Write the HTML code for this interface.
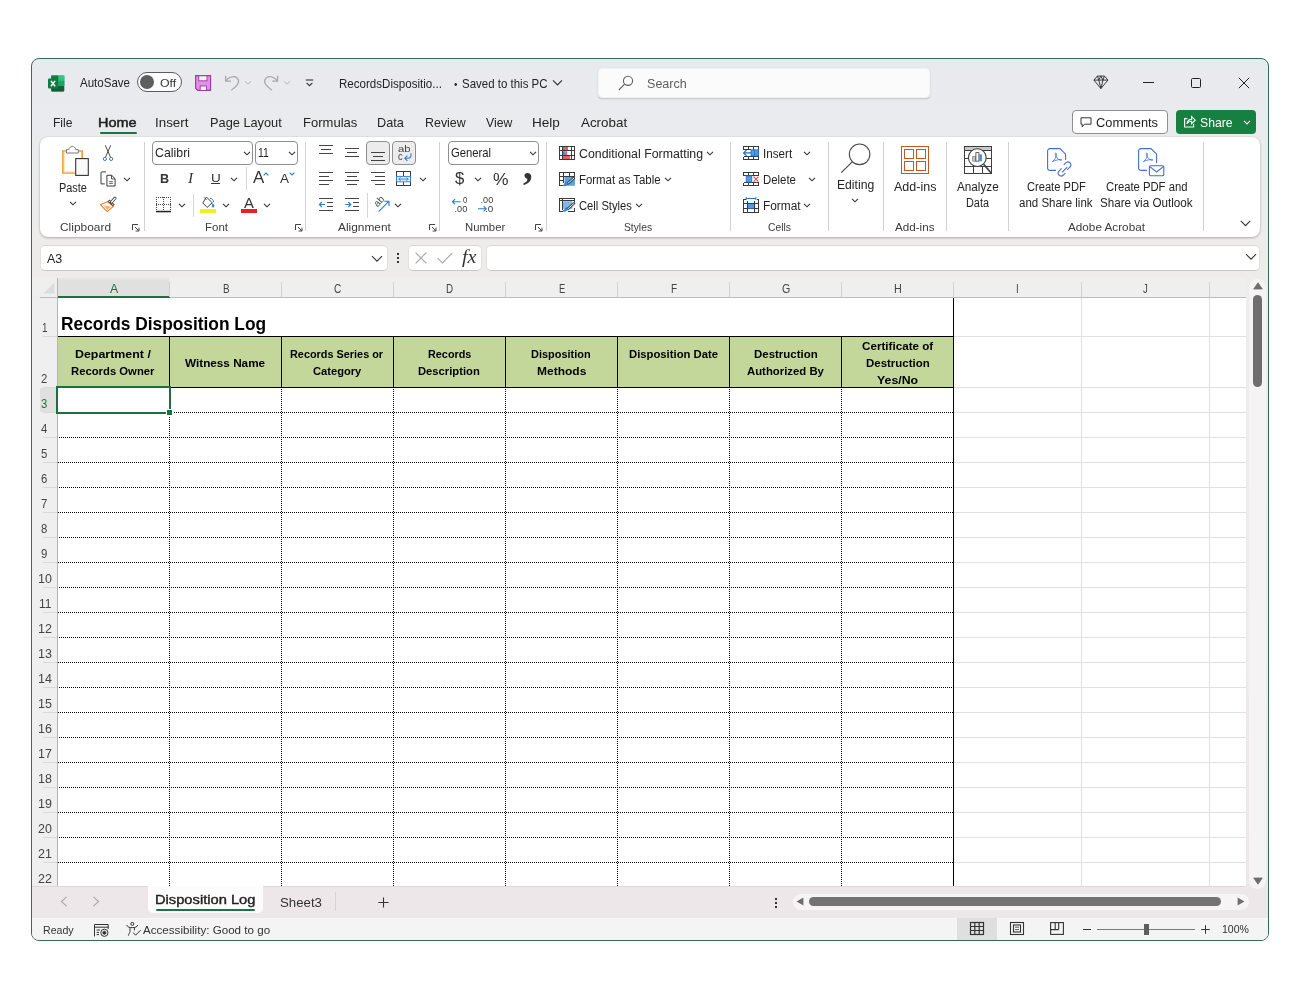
<!DOCTYPE html>
<html lang="en">
<head>
<meta charset="utf-8">
<title>RecordsDisposition - Excel</title>
<style>
html,body{margin:0;padding:0;background:#fff;}
body{width:1300px;height:1000px;overflow:hidden;position:relative;font-family:"Liberation Sans",sans-serif;color:#242424;}
#root{position:absolute;left:0;top:0;width:1300px;height:1000px;overflow:hidden;will-change:transform;}
.a{position:absolute;}
.t{position:absolute;white-space:nowrap;line-height:1;transform-origin:0 50%;display:block;}
svg{position:absolute;overflow:visible;}
#win{left:31px;top:58px;width:1236px;height:881px;border:1px solid #356b54;border-radius:8px;
 background:linear-gradient(180deg,#e8ebee 0px,#e9ebed 80px,#eeeceb 190px,#efedec 240px,#eeebec 600px,#ede7ea 830px,#ede7ea 100%);}
.sep{position:absolute;width:1px;background:#d2d2d2;top:142px;height:89px;}
.box{position:absolute;box-sizing:border-box;border:1px solid #8f8f8f;border-radius:4px;background:#fff;}
.hl{position:absolute;height:1px;}
.vl{position:absolute;width:1px;}
</style>
</head>
<body>
<div id="root">
<div id="win" class="a"></div>
<!-- ===== title bar ===== -->
<svg style="left:48px;top:74.6px" width="17" height="17" viewBox="0 0 17 17">
 <rect x="3.2" y="0.5" width="13" height="16" rx="1.2" fill="#21a366"/>
 <rect x="10.2" y="0.5" width="6.3" height="5.3" fill="#33c481"/>
 <rect x="3.2" y="0.5" width="7" height="10.6" fill="#107c41"/>
 <rect x="3.2" y="11.1" width="13" height="5.4" rx="1" fill="#185c37"/>
 <rect x="10.2" y="5.8" width="6.3" height="5.3" fill="#21a366"/>
 <rect x="0" y="3.6" width="10" height="10" rx="1" fill="#107c41"/>
 <path d="M2.9 5.9 L7.1 11.3 M7.1 5.9 L2.9 11.3" stroke="#fff" stroke-width="1.5"/>
</svg>
<span class="t" style="left:79.80px;top:77.05px;font-size:12.1px;transform:scaleX(0.9541);color:#242424">AutoSave</span>
<div class="a" style="left:137px;top:72px;width:45px;height:20px;box-sizing:border-box;border:1px solid #5c5c5c;border-radius:10px;background:#fdfdfd"></div>
<div class="a" style="left:140.2px;top:75.2px;width:13.6px;height:13.6px;border-radius:7px;background:#5e5e5e"></div>
<span class="t" style="left:159.50px;top:78.05px;font-size:10.6px;transform:scaleX(1.1650);color:#3a3a3a">Off</span>
<svg style="left:195px;top:75px" width="17" height="16" viewBox="0 0 17 16">
 <path d="M0.6 0.6 H15.6 V15.4 H2.8 L0.6 13.2 Z" fill="#dc92e2" stroke="#a832a8" stroke-width="1.1"/>
 <rect x="3.8" y="0.8" width="8.2" height="5" fill="#fdf5fd" stroke="#a832a8" stroke-width=".9"/>
 <rect x="5.2" y="11" width="6.2" height="4.4" fill="#fdf5fd" stroke="#a832a8" stroke-width=".9"/>
</svg>
<svg style="left:224px;top:74px" width="18" height="18" viewBox="0 0 18 18" fill="none" stroke="#a6a6a6" stroke-width="1.2">
 <path d="M1.6 1.8 V7.2 H7"/><path d="M1.8 7 C4.5 3.2 9.5 1.2 12.8 3.8 C16 6.6 14.6 10.4 11.2 13 L7.2 16.4"/>
</svg>
<svg style="left:244px;top:80px" width="8" height="6" viewBox="0 0 8 6" fill="none" stroke="#b5b5b5" stroke-width="1"><path d="M1 1.2 L4 4.2 L7 1.2"/></svg>
<svg style="left:263px;top:74px" width="18" height="18" viewBox="0 0 18 18" fill="none" stroke="#a6a6a6" stroke-width="1.2">
 <path d="M14.6 1.8 V7.2 H9.2"/><path d="M14.4 7 C11.7 3.2 6.7 1.2 3.4 3.8 C0.2 6.6 1.6 10.4 5 13 L9 16.4"/>
</svg>
<svg style="left:283px;top:80px" width="8" height="6" viewBox="0 0 8 6" fill="none" stroke="#b5b5b5" stroke-width="1"><path d="M1 1.2 L4 4.2 L7 1.2"/></svg>
<svg style="left:305px;top:79px" width="9" height="8" viewBox="0 0 9 8" fill="none" stroke="#333" stroke-width="1.1"><path d="M0.8 1 H8.2"/><path d="M1.6 3.8 L4.5 6.7 L7.4 3.8"/></svg>
<span class="t" style="left:339.10px;top:78.05px;font-size:12.1px;transform:scaleX(0.9563);color:#242424">RecordsDispositio...</span>
<span class="t" style="left:453.70px;top:79.71px;font-size:10px;transform:scaleX(0.9750);color:#242424">•</span>
<span class="t" style="left:461.90px;top:78.05px;font-size:12.1px;transform:scaleX(0.9497);color:#242424">Saved to this PC</span>
<svg style="left:552px;top:79px" width="11" height="8" viewBox="0 0 11 8" fill="none" stroke="#333" stroke-width="1.1"><path d="M1 1.4 L5.5 5.9 L10 1.4"/></svg>
<!-- search -->
<div class="a" style="left:597.6px;top:67.5px;width:332.2px;height:30.8px;box-sizing:border-box;border-radius:4px;background:#fbfbfb;border:1px solid #f1f2f3;box-shadow:0 1px 1.5px rgba(0,0,0,.17)"></div>
<svg style="left:618px;top:75px" width="16" height="16" viewBox="0 0 16 16" fill="none" stroke="#616161" stroke-width="1.1"><circle cx="10" cy="5.8" r="4.6"/><path d="M6.6 9.2 L0.8 15"/></svg>
<span class="t" style="left:646.90px;top:78.05px;font-size:12px;transform:scaleX(1.0469);color:#5c5c5c">Search</span>
<!-- window buttons -->
<svg style="left:1093.2px;top:75px" width="15.8" height="14.4" viewBox="0 0 18 16" fill="none" stroke="#333" stroke-width="1.1">
 <path d="M5 1 H13 L17 5.6 L9 15.2 L1 5.6 Z"/><path d="M1 5.6 H17"/><path d="M5 1 L6.6 5.6 L9 15.2 L11.4 5.6 L13 1"/><path d="M9 1 L6.6 5.6 M9 1 L11.4 5.6"/>
</svg>
<div class="a" style="left:1143px;top:82px;width:11px;height:1px;background:#222"></div>
<div class="a" style="left:1191px;top:78px;width:10px;height:10px;box-sizing:border-box;border:1px solid #222;border-radius:1.5px"></div>
<svg style="left:1238px;top:77px" width="12" height="12" viewBox="0 0 12 12" fill="none" stroke="#222" stroke-width="1"><path d="M0.8 0.8 L11.2 11.2 M11.2 0.8 L0.8 11.2"/></svg>
<!-- ===== tab row ===== -->
<span class="t" style="left:53.26px;top:117.05px;font-size:12.8px;transform:scaleX(0.9434);color:#242424">File</span>
<span class="t" style="left:98.17px;top:117.05px;font-size:12.8px;transform:scaleX(1.1297);color:#1f1f1f;-webkit-text-stroke:.5px #1f1f1f">Home</span>
<div class="a" style="left:99.5px;top:131.5px;width:37px;height:2.5px;border-radius:1.5px;background:#1a7446"></div>
<span class="t" style="left:154.66px;top:117.05px;font-size:12.8px;transform:scaleX(1.0429);color:#242424">Insert</span>
<span class="t" style="left:209.70px;top:117.05px;font-size:12.8px;transform:scaleX(0.9985);color:#242424">Page Layout</span>
<span class="t" style="left:302.78px;top:117.05px;font-size:12.8px;transform:scaleX(1.0186);color:#242424">Formulas</span>
<span class="t" style="left:376.91px;top:117.05px;font-size:12.8px;transform:scaleX(0.9921);color:#242424">Data</span>
<span class="t" style="left:424.73px;top:117.05px;font-size:12.8px;transform:scaleX(0.9708);color:#242424">Review</span>
<span class="t" style="left:486.10px;top:117.05px;font-size:12.8px;transform:scaleX(0.9553);color:#242424">View</span>
<span class="t" style="left:531.94px;top:117.05px;font-size:12.8px;transform:scaleX(1.0595);color:#242424">Help</span>
<span class="t" style="left:580.70px;top:117.05px;font-size:12.8px;transform:scaleX(1.0461);color:#242424">Acrobat</span>
<!-- comments / share -->
<div class="box" style="left:1072px;top:110px;width:96px;height:24px;border-color:#8f8f8f"></div>
<svg style="left:1080px;top:117px" width="12" height="11" viewBox="0 0 12 11" fill="none" stroke="#333" stroke-width="1"><path d="M1 0.8 H11 V7.2 H4.6 L2.2 9.8 V7.2 H1 Z"/></svg>
<span class="t" style="left:1096.40px;top:117.05px;font-size:12.8px;transform:scaleX(1.0022);color:#242424">Comments</span>
<div class="a" style="left:1176px;top:110px;width:80px;height:24px;border-radius:4px;background:#15803f"></div>
<svg style="left:1183px;top:115px" width="13" height="13" viewBox="0 0 13 13" fill="none" stroke="#fff" stroke-width="1.1"><path d="M4.4 3.6 H1.6 V12 H10.6 V8.8"/><path d="M3.8 8.8 C4.4 5.8 6.2 4.4 8.6 4.4 V1.6 L12.2 5.2 L8.6 8.6 V6.2 C6.4 6.2 5 7 3.8 8.8 Z"/></svg>
<span class="t" style="left:1199.80px;top:117.05px;font-size:12.8px;transform:scaleX(0.9550);color:#fff">Share</span>
<svg style="left:1243.4px;top:120px" width="8" height="5" viewBox="0 0 8 5" fill="none" stroke="#fff" stroke-width="1.2"><path d="M1 0.8 L4 3.8 L7 0.8"/></svg>
<!-- ===== ribbon panel ===== -->
<div class="a" style="left:40px;top:137px;width:1220px;height:99.8px;border-radius:8px;background:#fff;box-shadow:0 1px 2.5px rgba(0,0,0,.26),0 0 1.5px rgba(0,0,0,.12)"></div>
<div class="sep" style="left:143.5px"></div><div class="sep" style="left:305px"></div><div class="sep" style="left:439px"></div>
<div class="sep" style="left:546px"></div><div class="sep" style="left:730px"></div><div class="sep" style="left:828px"></div>
<div class="sep" style="left:883px"></div><div class="sep" style="left:946px"></div><div class="sep" style="left:1008px"></div><div class="sep" style="left:1203px"></div>
<!-- group labels -->
<span class="t" style="left:60.20px;top:222.05px;font-size:10.8px;transform:scaleX(1.1037);color:#3b3b3b">Clipboard</span>
<span class="t" style="left:205.40px;top:222.05px;font-size:10.8px;transform:scaleX(1.0646);color:#3b3b3b">Font</span>
<span class="t" style="left:338.00px;top:222.05px;font-size:10.8px;transform:scaleX(1.1018);color:#3b3b3b">Alignment</span>
<span class="t" style="left:465.20px;top:222.05px;font-size:10.8px;transform:scaleX(1.0463);color:#3b3b3b">Number</span>
<span class="t" style="left:624.20px;top:222.05px;font-size:10.8px;transform:scaleX(0.9532);color:#3b3b3b">Styles</span>
<span class="t" style="left:768.00px;top:222.05px;font-size:10.8px;transform:scaleX(0.9553);color:#3b3b3b">Cells</span>
<span class="t" style="left:895.00px;top:222.05px;font-size:10.8px;transform:scaleX(1.0777);color:#3b3b3b">Add-ins</span>
<span class="t" style="left:1067.50px;top:222.05px;font-size:10.8px;transform:scaleX(1.0864);color:#3b3b3b">Adobe Acrobat</span>
<!-- dialog launchers -->
<svg style="left:132px;top:224px" width="8" height="8" viewBox="0 0 8 8" fill="none" stroke="#444" stroke-width="1"><path d="M0.5 6 V0.5 H6"/><path d="M3 3 L7 7 M7 3.6 V7 H3.6"/></svg>
<svg style="left:294.5px;top:224px" width="8" height="8" viewBox="0 0 8 8" fill="none" stroke="#444" stroke-width="1"><path d="M0.5 6 V0.5 H6"/><path d="M3 3 L7 7 M7 3.6 V7 H3.6"/></svg>
<svg style="left:428.5px;top:224px" width="8" height="8" viewBox="0 0 8 8" fill="none" stroke="#444" stroke-width="1"><path d="M0.5 6 V0.5 H6"/><path d="M3 3 L7 7 M7 3.6 V7 H3.6"/></svg>
<svg style="left:535px;top:224px" width="8" height="8" viewBox="0 0 8 8" fill="none" stroke="#444" stroke-width="1"><path d="M0.5 6 V0.5 H6"/><path d="M3 3 L7 7 M7 3.6 V7 H3.6"/></svg>
<svg style="left:1240px;top:220px" width="11" height="7" viewBox="0 0 11 7" fill="none" stroke="#333" stroke-width="1.1"><path d="M0.8 0.8 L5.5 5.6 L10.2 0.8"/></svg>
<!-- == Clipboard == -->
<span class="t" style="left:59.10px;top:182.05px;font-size:12px;transform:scaleX(0.9093);color:#242424">Paste</span>
<svg style="left:68.5px;top:201px" width="8" height="5" viewBox="0 0 8 5" fill="none" stroke="#333" stroke-width="1.1"><path d="M1 0.8 L4 3.8 L7 0.8"/></svg>
<svg style="left:122.5px;top:177.3px" width="8" height="5" viewBox="0 0 8 5" fill="none" stroke="#333" stroke-width="1.1"><path d="M1 0.8 L4 3.8 L7 0.8"/></svg>
<!-- == Font == -->
<div class="box" style="left:152px;top:141px;width:101px;height:24px"></div>
<span class="t" style="left:155.00px;top:147.05px;font-size:12.6px;transform:scaleX(0.9802);color:#242424">Calibri</span>
<svg style="left:242.5px;top:151px" width="8" height="5" viewBox="0 0 8 5" fill="none" stroke="#333" stroke-width="1.1"><path d="M1 0.8 L4 3.8 L7 0.8"/></svg>
<div class="box" style="left:255px;top:141px;width:43px;height:24px"></div>
<span class="t" style="left:258.40px;top:147.05px;font-size:12.6px;transform:scaleX(0.8264);color:#242424">11</span>
<svg style="left:287.5px;top:151px" width="8" height="5" viewBox="0 0 8 5" fill="none" stroke="#333" stroke-width="1.1"><path d="M1 0.8 L4 3.8 L7 0.8"/></svg>
<span class="t" style="left:160.00px;top:172.05px;font-size:13.2px;transform:scaleX(0.9556);color:#333;font-weight:bold">B</span>
<span class="t" style="left:187.87px;top:171.05px;font-size:14.5px;transform:scaleX(1.0714);color:#333;font-style:italic;font-family:'Liberation Serif',serif">I</span>
<span class="t" style="left:211.00px;top:173.05px;font-size:11.8px;transform:scaleX(1.1500);color:#333">U</span>
<div class="a" style="left:211px;top:183.4px;width:9.4px;height:1.1px;background:#333"></div>
<svg style="left:230.2px;top:177px" width="8" height="5" viewBox="0 0 8 5" fill="none" stroke="#333" stroke-width="1.1"><path d="M1 0.8 L4 3.8 L7 0.8"/></svg>
<div class="a" style="left:245.5px;top:167px;width:1px;height:23px;background:#d6d6d6"></div>
<span class="t" style="left:252.60px;top:169.05px;font-size:16.4px;transform:scaleX(1.0273);color:#333">A</span>
<svg style="left:262.8px;top:172px" width="6" height="4" viewBox="0 0 6 4" fill="none" stroke="#2b7cd3" stroke-width="1.1"><path d="M0.6 3.4 L3 1 L5.4 3.4"/></svg>
<span class="t" style="left:280.20px;top:173.05px;font-size:12.3px;transform:scaleX(1.1000);color:#333">A</span>
<svg style="left:288.6px;top:172px" width="6" height="4" viewBox="0 0 6 4" fill="none" stroke="#2b7cd3" stroke-width="1.1"><path d="M0.6 0.6 L3 3 L5.4 0.6"/></svg>
<!-- borders icon (page coords in 26) -->
<svg style="left:178.3px;top:203px" width="8" height="5" viewBox="0 0 8 5" fill="none" stroke="#333" stroke-width="1.1"><path d="M1 0.8 L4 3.8 L7 0.8"/></svg>
<div class="a" style="left:193px;top:194px;width:1px;height:23px;background:#d6d6d6"></div>
<!-- fill colour -->
<svg style="left:200px;top:196px" width="17" height="18" viewBox="0 0 17 18" fill="none" stroke-width="1">
 <path d="M6.4 1 L12.2 6.8 L7.2 11.4 L2.8 7 Z" stroke="#444" fill="#fff"/><path d="M6.6 3.8 L4.2 1.4" stroke="#444"/>
 <path d="M12.6 7.4 C13.8 9 14.6 10 13.6 11 C12.6 11.8 11.6 10.8 12.6 7.4 Z" fill="#2b7cd3" stroke="#2b7cd3" stroke-width=".6"/>
 <path d="M9.8 2.2 C11.8 2.4 13.4 3.8 13.6 6" stroke="#2b7cd3"/>
 <rect x="0" y="13" width="16" height="4" fill="#f7ee1c" stroke="none"/>
</svg>
<svg style="left:222.2px;top:203px" width="8" height="5" viewBox="0 0 8 5" fill="none" stroke="#333" stroke-width="1.1"><path d="M1 0.8 L4 3.8 L7 0.8"/></svg>
<!-- font colour -->
<span class="t" style="left:244.10px;top:195.76px;font-size:14px;transform:scaleX(1.0600);color:#333">A</span>
<div class="a" style="left:241px;top:209px;width:16px;height:4px;background:#e8231f"></div>
<svg style="left:263.3px;top:203px" width="8" height="5" viewBox="0 0 8 5" fill="none" stroke="#333" stroke-width="1.1"><path d="M1 0.8 L4 3.8 L7 0.8"/></svg>
<!-- == Alignment == -->
<div class="box" style="left:366px;top:141px;width:24px;height:24px;background:#ececec;border-color:#8f8f8f"></div>
<div class="box" style="left:392px;top:141px;width:24px;height:24px;background:#ececec;border-color:#8f8f8f"></div>
<span class="t" style="left:398.10px;top:144.05px;font-size:9.6px;transform:scaleX(1.1707);color:#444">ab</span>
<span class="t" style="left:398.10px;top:152.05px;font-size:10.4px;transform:scaleX(0.9000);color:#444">c</span>
<svg style="left:419.3px;top:177.3px" width="8" height="5" viewBox="0 0 8 5" fill="none" stroke="#333" stroke-width="1.1"><path d="M1 0.8 L4 3.8 L7 0.8"/></svg>
<div class="a" style="left:366.5px;top:193px;width:1px;height:25px;background:#d6d6d6"></div>
<svg style="left:394.3px;top:203.3px" width="8" height="5" viewBox="0 0 8 5" fill="none" stroke="#333" stroke-width="1.1"><path d="M1 0.8 L4 3.8 L7 0.8"/></svg>
<!-- == Number == -->
<div class="box" style="left:448px;top:141px;width:91px;height:24px"></div>
<span class="t" style="left:451.40px;top:147.05px;font-size:12.6px;transform:scaleX(0.8953);color:#242424">General</span>
<svg style="left:528.5px;top:151px" width="8" height="5" viewBox="0 0 8 5" fill="none" stroke="#333" stroke-width="1.1"><path d="M1 0.8 L4 3.8 L7 0.8"/></svg>
<span class="t" style="left:455.30px;top:170.78px;font-size:16px;transform:scaleX(1.0444);color:#333">$</span>
<svg style="left:474.4px;top:176.5px" width="8" height="5" viewBox="0 0 8 5" fill="none" stroke="#333" stroke-width="1.1"><path d="M1 0.8 L4 3.8 L7 0.8"/></svg>
<span class="t" style="left:492.90px;top:170.54px;font-size:16.5px;transform:scaleX(1.0600);color:#333">%</span>
<!-- == Styles == -->
<span class="t" style="left:579.10px;top:148.05px;font-size:12px;transform:scaleX(1.0279);color:#242424">Conditional Formatting</span>
<svg style="left:705.6px;top:151.4px" width="8" height="5" viewBox="0 0 8 5" fill="none" stroke="#333" stroke-width="1.1"><path d="M1 0.8 L4 3.8 L7 0.8"/></svg>
<span class="t" style="left:579.10px;top:174.05px;font-size:12px;transform:scaleX(0.9507);color:#242424">Format as Table</span>
<svg style="left:663.6px;top:177.4px" width="8" height="5" viewBox="0 0 8 5" fill="none" stroke="#333" stroke-width="1.1"><path d="M1 0.8 L4 3.8 L7 0.8"/></svg>
<span class="t" style="left:579.10px;top:200.05px;font-size:12px;transform:scaleX(0.9333);color:#242424">Cell Styles</span>
<svg style="left:634.5px;top:203.4px" width="8" height="5" viewBox="0 0 8 5" fill="none" stroke="#333" stroke-width="1.1"><path d="M1 0.8 L4 3.8 L7 0.8"/></svg>
<!-- == Cells == -->
<span class="t" style="left:762.63px;top:148.05px;font-size:12px;transform:scaleX(0.9704);color:#242424">Insert</span>
<svg style="left:803px;top:151.4px" width="8" height="5" viewBox="0 0 8 5" fill="none" stroke="#333" stroke-width="1.1"><path d="M1 0.8 L4 3.8 L7 0.8"/></svg>
<span class="t" style="left:762.90px;top:174.05px;font-size:12px;transform:scaleX(0.9482);color:#242424">Delete</span>
<svg style="left:807.6px;top:177.4px" width="8" height="5" viewBox="0 0 8 5" fill="none" stroke="#333" stroke-width="1.1"><path d="M1 0.8 L4 3.8 L7 0.8"/></svg>
<span class="t" style="left:762.90px;top:200.05px;font-size:12px;transform:scaleX(0.9904);color:#242424">Format</span>
<svg style="left:803px;top:203.4px" width="8" height="5" viewBox="0 0 8 5" fill="none" stroke="#333" stroke-width="1.1"><path d="M1 0.8 L4 3.8 L7 0.8"/></svg>
<!-- == Editing == -->
<span class="t" style="left:837.10px;top:179.05px;font-size:12px;transform:scaleX(1.0134);color:#242424">Editing</span>
<svg style="left:851.3px;top:198.4px" width="8" height="5" viewBox="0 0 8 5" fill="none" stroke="#333" stroke-width="1.1"><path d="M1 0.8 L4 3.8 L7 0.8"/></svg>
<!-- == Add-ins == -->
<span class="t" style="left:893.90px;top:181.05px;font-size:12px;transform:scaleX(1.0421);color:#242424">Add-ins</span>
<!-- == Analyze data == -->
<span class="t" style="left:956.60px;top:181.05px;font-size:12px;transform:scaleX(0.9763);color:#242424">Analyze</span>
<span class="t" style="left:966.30px;top:197.05px;font-size:12px;transform:scaleX(0.9075);color:#242424">Data</span>
<!-- == Adobe Acrobat == -->
<svg style="left:1047px;top:147.5px" width="26" height="29" viewBox="0 0 26 29" fill="none" stroke="#3f6fce" stroke-width="1.1">
 <path d="M9 22.4 H3 C1.6 22.4 0.6 21.4 0.6 20 V3 C0.6 1.6 1.6 0.6 3 0.6 H13 L18.6 6.2 V12"/>
 <path d="M5.4 13.6 C8 12 9.6 8.6 9.4 5.8 C9.2 4.6 8 4.8 8.2 6.2 C8.8 9.4 11.4 12 14 12.4 C15.2 12.4 15 11.2 13.8 11.4 C10.8 11.6 7.4 12.6 5.4 13.6 Z" stroke-width=".8"/>
 <path d="M14.6 20.4 L12.4 22.6 C10.8 24.2 10.8 26 12 27.2 C13.2 28.4 15 28.4 16.6 26.8 L18.2 25.2"/><path d="M20.4 21.6 L22.6 19.4 C24.2 17.8 24.2 16 23 14.8 C21.8 13.6 20 13.6 18.4 15.2 L16.8 16.8"/><path d="M15 24.4 L20.2 19.2"/>
</svg>
<span class="t" style="left:1026.90px;top:181.05px;font-size:12px;transform:scaleX(0.9267);color:#242424">Create PDF</span>
<span class="t" style="left:1019.00px;top:197.05px;font-size:12px;transform:scaleX(0.9586);color:#242424">and Share link</span>
<svg style="left:1137.6px;top:147.5px" width="27" height="29" viewBox="0 0 27 29" fill="none" stroke="#3f6fce" stroke-width="1.1">
 <path d="M9 22.4 H3 C1.6 22.4 0.6 21.4 0.6 20 V3 C0.6 1.6 1.6 0.6 3 0.6 H13 L18.6 6.2 V15"/>
 <path d="M5.4 13.6 C8 12 9.6 8.6 9.4 5.8 C9.2 4.6 8 4.8 8.2 6.2 C8.8 9.4 11.4 12 14 12.4 C15.2 12.4 15 11.2 13.8 11.4 C10.8 11.6 7.4 12.6 5.4 13.6 Z" stroke-width=".8"/>
 <rect x="11.4" y="17.8" width="14.4" height="10" rx="1.2" fill="#fff"/><path d="M11.8 18.6 L18.6 24 L25.4 18.6"/>
</svg>
<span class="t" style="left:1106.10px;top:181.05px;font-size:12px;transform:scaleX(0.9392);color:#242424">Create PDF and</span>
<span class="t" style="left:1100.00px;top:197.05px;font-size:12px;transform:scaleX(0.9701);color:#242424">Share via Outlook</span>
<!-- ===== icons drawn in page coordinates ===== -->
<svg style="left:0;top:0" width="1300" height="1000" viewBox="0 0 1300 1000" fill="none">
 <!-- paste -->
 <path d="M66.4 151 H62.9 V173 H75.4" stroke="#e9a23b" stroke-width="1.7"/><path d="M66.4 152.2 H64.3 V171.8 H75.4" stroke="#fde2b5" stroke-width="1"/>
 <path d="M78.4 151 H82.2 V158.2" stroke="#e9a23b" stroke-width="1.7"/>
 <path d="M66.5 153 V149.6 H68.9 C69.3 145.4 75.3 145.4 75.7 149.6 H78.3 V153 Z" stroke="#6a6a6a" stroke-width=".9" fill="#fff"/>
 <rect x="75.7" y="158.6" width="12.6" height="16.8" stroke="#333" stroke-width="1.1" fill="#fafafa"/>
 <!-- scissors -->
 <path d="M105.3 145.3 L110.5 157.2 M110.7 145.3 L105.5 157.2" stroke="#4a4a4a" stroke-width="1"/>
 <circle cx="104.9" cy="158.9" r="1.6" stroke="#2b7cd3" stroke-width="1"/><circle cx="111.1" cy="158.9" r="1.6" stroke="#2b7cd3" stroke-width="1"/>
 <!-- copy -->
 <path d="M106 171.9 H102 Q101 171.9 101 172.9 V183.9 H104.8" stroke="#3a3a3a" stroke-width="1"/>
 <path d="M106.9 175.3 H111.7 L115.1 178.7 V186 H106.9 Z" stroke="#3a3a3a" stroke-width="1" fill="#fff"/>
 <path d="M111.5 175.5 V178.9 H114.9" stroke="#3a3a3a" stroke-width=".9"/><path d="M109.2 181.6 H112.9 M109.2 183.4 H112.9" stroke="#3a3a3a" stroke-width=".8"/>
 <!-- format painter -->
 <path d="M107.6 201.8 L100.5 204.6 L107.1 211.7 L113.4 206.3 Z" stroke="#e5822f" stroke-width="1.1" fill="#fff" stroke-linejoin="round"/>
 <path d="M103.6 205.6 L107.3 209.9 L111 206.6 Z" fill="#f3b27c"/>
 <path d="M108.4 200.4 L113.9 205.5" stroke="#4a4a4a" stroke-width="2.6"/><path d="M108.8 200.8 L113.5 205.1" stroke="#fff" stroke-width=".9"/>
 <path d="M111.3 202.3 L115 198.1" stroke="#4a4a4a" stroke-width="3.1" stroke-linecap="round"/><path d="M111.6 202 L115 198.1" stroke="#fff" stroke-width="1.3" stroke-linecap="round"/>
 <!-- alignment rows -->
 <g stroke="#444" stroke-width="1" shape-rendering="crispEdges">
  <path d="M319 145.5 H333 M321 149.5 H331 M319 153.5 H333"/>
  <path d="M345 148.5 H359 M347 152.5 H357 M345 156.5 H359"/>
  <path d="M371 152.5 H385 M373 156.5 H383 M371 160.5 H385"/>
  <path d="M319 172.5 H333 M319 176.5 H329 M319 180.5 H333 M319 184.5 H329"/>
  <path d="M345 172.5 H359 M347 176.5 H357 M345 180.5 H359 M347 184.5 H357"/>
  <path d="M371 172.5 H385 M375 176.5 H385 M371 180.5 H385 M375 184.5 H385"/>
  <path d="M319 198.5 H333 M327 202.5 H333 M327 206.5 H333 M319 210.5 H333"/>
  <path d="M345 198.5 H359 M353 202.5 H359 M353 206.5 H359 M345 210.5 H359"/>
 </g>
 <path d="M325 204.5 H319.6 M321.9 202 L319.4 204.5 L321.9 207" stroke="#2b7cd3" stroke-width="1.1"/>
 <path d="M345.2 204.5 H350.6 M348.3 202 L350.8 204.5 L348.3 207" stroke="#2b7cd3" stroke-width="1.1"/>
 <!-- wrap text arrow -->
 <path d="M411 153.2 V155 C411 157.4 409.8 158.2 407.8 158.2 H405.2 M407.4 155.6 L404.8 158.2 L407.4 160.8" stroke="#2b7cd3" stroke-width="1.1"/>
 <!-- merge & center -->
 <g stroke="#3a3a3a" stroke-width="1" shape-rendering="crispEdges"><path d="M396.5 171.5 H410.5 V185.5 H396.5 Z M403.5 171.5 V176 M403.5 181.5 V185.5"/></g>
 <rect x="396.5" y="176.4" width="14" height="5.4" fill="#dcebf9" stroke="#2b7cd3" stroke-width=".9"/>
 <path d="M398.8 179.1 H408.2 M400.5 177.4 L398.8 179.1 L400.5 180.8 M406.5 177.4 L408.2 179.1 L406.5 180.8" stroke="#2b7cd3" stroke-width=".9"/>
 <!-- orientation -->
 <text transform="translate(377.6 207.4) rotate(-47)" font-family="Liberation Sans, sans-serif" font-size="9.8" fill="#444">ab</text>
 <path d="M378.6 211.6 L388.8 201.4 M384.2 201.2 H389 V206" stroke="#2b7cd3" stroke-width="1.1"/>
</svg>
<!-- number group glyph icons -->
<svg style="left:0;top:0" width="1300" height="1000" viewBox="0 0 1300 1000" fill="none">
 <text x="523" y="178.7" font-family="Liberation Serif, serif" font-weight="bold" font-size="39" fill="#333">,</text>
 <g font-family="Liberation Sans, sans-serif" font-size="8.3" fill="#3a3a3a">
  <text x="462.9" y="203.1" textLength="4.3" lengthAdjust="spacingAndGlyphs">0</text>
  <text x="454.6" y="211.9" textLength="12.6" lengthAdjust="spacingAndGlyphs">.00</text>
  <text x="480.6" y="203.1" textLength="12.6" lengthAdjust="spacingAndGlyphs">.00</text>
  <text x="485" y="211.9" textLength="8.2" lengthAdjust="spacingAndGlyphs">.0</text>
 </g>
 <path d="M460.6 201.8 H452.4 M455 199.2 L452.4 201.8 L455 204.4" stroke="#2b7cd3" stroke-width="1.1"/>
 <path d="M478 208.8 H486.2 M483.6 206.2 L486.2 208.8 L483.6 211.4" stroke="#2b7cd3" stroke-width="1.1"/>
</svg>
<!-- styles group icons -->
<svg style="left:0;top:0" width="1300" height="1000" viewBox="0 0 1300 1000" fill="none">
 <rect x="563" y="147" width="5" height="3.2" fill="#ee5a55"/><rect x="563" y="151.2" width="2.2" height="3.8" fill="#3d8ee0"/><rect x="565.2" y="151.2" width="1.9" height="3.8" fill="#ee5a55"/><rect x="563" y="156" width="6.9" height="3.2" fill="#ee5a55"/>
 <g stroke="#3a3a3a" stroke-width="1" shape-rendering="crispEdges"><path d="M559.5 146.5 H574.5 V159.5 H559.5 Z M562.5 146.5 V159.5 M571.5 146.5 V159.5 M559.5 150.5 H574.5 M559.5 155.5 H574.5"/></g>
 <!-- format as table -->
 <rect x="564.5" y="177" width="10.4" height="8.8" fill="#57a3e8"/>
 <g stroke="#3a3a3a" stroke-width="1" shape-rendering="crispEdges"><path d="M574.5 177 V172.5 H559.5 V185.5 H563 M563.5 172.5 V183 M569.5 172.5 V177 M559.5 176.5 H574.5 M559.5 180.5 H564"/></g>
 <path d="M573.8 178.3 L568 183.2" stroke="#3a3a3a" stroke-width="2.6" stroke-linecap="round"/><path d="M573.8 178.3 L568 183.2" stroke="#f4f4f4" stroke-width="1" stroke-linecap="round"/>
 <path d="M568.4 183.9 c-1.6 .2 -2 1.6 -3.6 1.8 c-.8 .2 -1.6 0 -2 -.2 c1.4 -.4 1.6 -1.6 2.6 -2.8 c1 -1 2.4 -.2 3 1.2 Z" fill="#3f8fdc" stroke="#2467b0" stroke-width=".6"/>
 <!-- cell styles -->
 <rect x="562.6" y="201.2" width="9.8" height="7.6" fill="#7db7ee"/>
 <g stroke="#3a3a3a" stroke-width="1" shape-rendering="crispEdges"><path d="M574.5 203 V198.5 H559.5 V211.5 H563 M568 211.5 H574.5 V208 M562.5 198.5 V210 M559.5 200.5 H574.5"/></g>
 <path d="M574 203.4 L568 208.7" stroke="#3a3a3a" stroke-width="2.6" stroke-linecap="round"/><path d="M574 203.4 L568 208.7" stroke="#f4f4f4" stroke-width="1" stroke-linecap="round"/>
 <path d="M568.4 209.5 c-1.6 .2 -2 1.6 -3.6 1.8 c-.8 .2 -1.6 0 -2 -.2 c1.4 -.4 1.6 -1.6 2.6 -2.8 c1 -1 2.4 -.2 3 1.2 Z" fill="#3f8fdc" stroke="#2467b0" stroke-width=".6"/>
</svg>
<!-- cells group icons -->
<svg style="left:0;top:0" width="1300" height="1000" viewBox="0 0 1300 1000" fill="none">
 <!-- insert -->
 <g stroke="#3a3a3a" stroke-width="1" shape-rendering="crispEdges"><path d="M743.5 149.5 V146.5 H758.5 V159.5 H743.5 V156.5 M748.5 146.5 V149.5 M753.5 146.5 V149.5 M748.5 156.5 V159.5 M753.5 156.5 V159.5 M743.5 149.5 H751 M743.5 156.5 H758.5"/></g>
 <rect x="751" y="149.8" width="7.6" height="6.2" fill="#4f9be6" stroke="#1f6fc4" stroke-width=".8"/><path d="M754.6 149.8 V156" stroke="#1f6fc4" stroke-width=".8"/>
 <path d="M751 152.9 H743.6 M746.6 149.9 L743.6 152.9 L746.6 155.9" stroke="#1f6fc4" stroke-width="1.2"/>
 <!-- delete -->
 <g stroke="#3a3a3a" stroke-width="1" shape-rendering="crispEdges"><path d="M743.5 175.5 V172.5 H758.5 V175.5 M743.5 182.5 V185.5 H758.5 V182.5 M748.5 172.5 V175.5 M753.5 172.5 V175.5 M748.5 182.5 V185.5 M753.5 182.5 V185.5 M743.5 175.5 H758.5 M743.5 182.5 H758.5"/></g>
 <rect x="746.2" y="175.9" width="5.6" height="6.2" fill="#4f9be6" stroke="#1f6fc4" stroke-width=".8"/>
 <path d="M753.6 176.6 L758.4 181.6 M758.4 176.6 L753.6 181.6" stroke="#e8554f" stroke-width="1.2"/>
 <!-- format -->
 <path d="M746.2 198.5 H755.8 M746.2 197.1 V199.9 M755.8 197.1 V199.9" stroke="#1f6fc4" stroke-width="1"/>
 <rect x="746.6" y="202.6" width="8.8" height="7" fill="#cfe4f7"/>
 <g stroke="#3a3a3a" stroke-width="1" shape-rendering="crispEdges"><path d="M745.5 199.5 H743.5 V212.5 H758.5 V199.5 H756.5 M747.5 201 V212.5 M754.5 201 V212.5 M743.5 203.5 H758.5 M743.5 208.5 H758.5"/></g>
 <rect x="748" y="204" width="6" height="4.4" fill="#4f9be6"/>
</svg>
<!-- editing / add-ins / analyze icons -->
<svg style="left:0;top:0" width="1300" height="1000" viewBox="0 0 1300 1000" fill="none">
 <circle cx="859.6" cy="154.3" r="10.3" stroke="#4a4a4a" stroke-width="1.1"/><path d="M852.4 161.6 L841.3 172.7" stroke="#4a4a4a" stroke-width="1.2"/>
 <g stroke="#c5571c" stroke-width="1" shape-rendering="crispEdges"><rect x="901.5" y="146.5" width="27" height="27"/><rect x="904.5" y="149.5" width="9" height="9"/><rect x="916.5" y="149.5" width="9" height="9"/><rect x="904.5" y="161.5" width="9" height="9"/><rect x="916.5" y="161.5" width="9" height="9"/></g>
 <rect x="965" y="147" width="26" height="3.4" fill="#c8c8c8"/>
 <g stroke="#3f3f3f" stroke-width="1" shape-rendering="crispEdges"><rect x="964.5" y="146.5" width="27" height="27"/><path d="M964.5 150.5 H991.5 M964.5 158.5 H991.5 M964.5 166.5 H991.5 M973.5 166.5 V173.5 M982.5 166.5 V173.5"/></g>
 <circle cx="977.3" cy="157.6" r="8.9" fill="#fff" stroke="#3f3f3f" stroke-width="1.1"/>
 <rect x="972.7" y="156.6" width="3" height="4.6" fill="#c4c4c4" stroke="#777" stroke-width=".6"/><rect x="975.9" y="152.6" width="3" height="8.6" fill="#fff" stroke="#3f3f3f" stroke-width=".8"/><rect x="979.2" y="154.4" width="2.7" height="6.8" fill="#3d8ee0"/>
 <path d="M983.6 164.2 L991.4 173.2" stroke="#3f3f3f" stroke-width="1.7"/>
</svg>
<!-- borders icon -->
<svg style="left:0;top:0" width="1300" height="1000" viewBox="0 0 1300 1000" fill="none">
 <g stroke="#444" stroke-width="1" stroke-dasharray="1 1" shape-rendering="crispEdges"><path d="M156 197.5 H171 M156 204.5 H171 M156.5 197 V210 M163.5 197 V210 M170.5 197 V210"/></g>
 <rect x="156" y="210.8" width="15" height="1.5" fill="#222"/>
</svg>
<!-- ===== formula bar ===== -->
<div class="a" style="left:40px;top:245px;width:348px;height:26px;box-sizing:border-box;border-radius:5px;background:#fff;border:1px solid #e2e1e0;border-top-color:#d8d7d6;border-bottom-color:#c8c7c6"></div>
<span class="t" style="left:46.70px;top:252.05px;font-size:13.2px;transform:scaleX(0.9433);color:#242424">A3</span>
<svg style="left:371px;top:255px" width="12" height="8" viewBox="0 0 12 8" fill="none" stroke="#333" stroke-width="1.1"><path d="M1 1.2 L6 6.2 L11 1.2"/></svg>
<div class="a" style="left:397px;top:253px;width:2px;height:2px;background:#333"></div><div class="a" style="left:397px;top:257px;width:2px;height:2px;background:#333"></div><div class="a" style="left:397px;top:261px;width:2px;height:2px;background:#333"></div>
<div class="a" style="left:408px;top:245px;width:74px;height:26px;box-sizing:border-box;border-radius:5px;background:#fff;border:1px solid #e2e1e0;border-top-color:#d8d7d6;border-bottom-color:#c8c7c6"></div>
<svg style="left:415px;top:252px" width="12" height="12" viewBox="0 0 12 12" fill="none" stroke="#a9a9a9" stroke-width="1.15"><path d="M0.6 0.6 L11.4 11.4 M11.4 0.6 L0.6 11.4"/></svg>
<svg style="left:437px;top:252px" width="16" height="12" viewBox="0 0 16 12" fill="none" stroke="#a9a9a9" stroke-width="1.15"><path d="M0.6 6.2 L5.4 11 L15.4 0.8"/></svg>
<span class="t" style="left:461.90px;top:248.05px;font-size:18px;transform:scaleX(1.1153);color:#333;font-style:italic;font-family:'Liberation Serif',serif">fx</span>
<div class="a" style="left:486px;top:245px;width:774px;height:26px;box-sizing:border-box;border-radius:5px;background:#fff;border:1px solid #e2e1e0;border-top-color:#d8d7d6;border-bottom-color:#c8c7c6"></div>
<svg style="left:1244.6px;top:253px" width="12" height="8" viewBox="0 0 12 8" fill="none" stroke="#333" stroke-width="1.1"><path d="M1 1.2 L6 6.2 L11 1.2"/></svg>
<!-- ===== sheet grid ===== -->
<div class="a" style="left:40px;top:278px;width:1206px;height:608px;background:#fff"></div>
<div class="a" style="left:32px;top:278px;width:1214px;height:19px;background:linear-gradient(180deg,#f1efee 0,#efefef 3px,#efefef 100%)"></div>
<div class="a" style="left:40px;top:297px;width:1206px;height:1px;background:#bcbcbc"></div>
<div class="a" style="left:32px;top:298px;width:25px;height:588px;background:#efefef"></div>
<div class="a" style="left:57px;top:278px;width:1px;height:608px;background:#b4b4b4"></div>
<svg style="left:43px;top:282px" width="12" height="12" viewBox="0 0 12 12"><path d="M11.4 0.4 V11.6 H0.4 Z" fill="#dcdcdc"/></svg>
<div class="a" style="left:58px;top:278px;width:111px;height:18px;background:linear-gradient(180deg,#e8e6e5 0,#e0e0e0 3px,#e0e0e0 100%)"></div>
<div class="a" style="left:58px;top:296px;width:112px;height:2px;background:#1d6f42"></div>
<div class="a" style="left:40px;top:388px;width:17px;height:24px;background:#e0e0e0"></div>
<div class="vl" style="left:169px;top:282px;height:15px;background:#d2d2d2"></div>
<span class="t" style="left:109.70px;top:283.05px;font-size:12px;transform:scaleX(1.0250);color:#1d6f42">A</span>
<div class="vl" style="left:281px;top:282px;height:15px;background:#d2d2d2"></div>
<span class="t" style="left:222.50px;top:283.05px;font-size:12px;transform:scaleX(0.8250);color:#444">B</span>
<div class="vl" style="left:393px;top:282px;height:15px;background:#d2d2d2"></div>
<span class="t" style="left:334.00px;top:283.05px;font-size:12px;transform:scaleX(0.8444);color:#444">C</span>
<div class="vl" style="left:505px;top:282px;height:15px;background:#d2d2d2"></div>
<span class="t" style="left:446.10px;top:283.05px;font-size:12px;transform:scaleX(0.8222);color:#444">D</span>
<div class="vl" style="left:617px;top:282px;height:15px;background:#d2d2d2"></div>
<span class="t" style="left:558.70px;top:283.05px;font-size:12px;transform:scaleX(0.7750);color:#444">E</span>
<div class="vl" style="left:729px;top:282px;height:15px;background:#d2d2d2"></div>
<span class="t" style="left:670.90px;top:283.05px;font-size:12px;transform:scaleX(0.8286);color:#444">F</span>
<div class="vl" style="left:841px;top:282px;height:15px;background:#d2d2d2"></div>
<span class="t" style="left:781.80px;top:283.05px;font-size:12px;transform:scaleX(0.8889);color:#444">G</span>
<div class="vl" style="left:953px;top:282px;height:15px;background:#d2d2d2"></div>
<span class="t" style="left:894.20px;top:283.05px;font-size:12px;transform:scaleX(0.9000);color:#444">H</span>
<div class="vl" style="left:1081px;top:282px;height:15px;background:#d2d2d2"></div>
<span class="t" style="left:1016.20px;top:283.05px;font-size:12px;transform:scaleX(0.8000);color:#444">I</span>
<div class="vl" style="left:1209px;top:282px;height:15px;background:#d2d2d2"></div>
<span class="t" style="left:1143.40px;top:283.05px;font-size:12px;transform:scaleX(0.8000);color:#444">J</span>
<div class="hl" style="left:954px;top:336px;width:292px;background:#e1e1e1"></div>
<div class="hl" style="left:954px;top:387px;width:292px;background:#e1e1e1"></div>
<div class="hl" style="left:954px;top:412px;width:292px;background:#e1e1e1"></div>
<div class="hl" style="left:954px;top:437px;width:292px;background:#e1e1e1"></div>
<div class="hl" style="left:954px;top:462px;width:292px;background:#e1e1e1"></div>
<div class="hl" style="left:954px;top:487px;width:292px;background:#e1e1e1"></div>
<div class="hl" style="left:954px;top:512px;width:292px;background:#e1e1e1"></div>
<div class="hl" style="left:954px;top:537px;width:292px;background:#e1e1e1"></div>
<div class="hl" style="left:954px;top:562px;width:292px;background:#e1e1e1"></div>
<div class="hl" style="left:954px;top:587px;width:292px;background:#e1e1e1"></div>
<div class="hl" style="left:954px;top:612px;width:292px;background:#e1e1e1"></div>
<div class="hl" style="left:954px;top:637px;width:292px;background:#e1e1e1"></div>
<div class="hl" style="left:954px;top:662px;width:292px;background:#e1e1e1"></div>
<div class="hl" style="left:954px;top:687px;width:292px;background:#e1e1e1"></div>
<div class="hl" style="left:954px;top:712px;width:292px;background:#e1e1e1"></div>
<div class="hl" style="left:954px;top:737px;width:292px;background:#e1e1e1"></div>
<div class="hl" style="left:954px;top:762px;width:292px;background:#e1e1e1"></div>
<div class="hl" style="left:954px;top:787px;width:292px;background:#e1e1e1"></div>
<div class="hl" style="left:954px;top:812px;width:292px;background:#e1e1e1"></div>
<div class="hl" style="left:954px;top:837px;width:292px;background:#e1e1e1"></div>
<div class="hl" style="left:954px;top:862px;width:292px;background:#e1e1e1"></div>
<div class="vl" style="left:1081px;top:298px;height:588px;background:#e1e1e1"></div>
<div class="vl" style="left:1209px;top:298px;height:588px;background:#e1e1e1"></div>
<div class="hl" style="left:43px;top:336px;width:14px;background:#d9d9d9"></div>
<div class="hl" style="left:43px;top:387px;width:14px;background:#d9d9d9"></div>
<div class="hl" style="left:43px;top:412px;width:14px;background:#d9d9d9"></div>
<div class="hl" style="left:43px;top:437px;width:14px;background:#d9d9d9"></div>
<div class="hl" style="left:43px;top:462px;width:14px;background:#d9d9d9"></div>
<div class="hl" style="left:43px;top:487px;width:14px;background:#d9d9d9"></div>
<div class="hl" style="left:43px;top:512px;width:14px;background:#d9d9d9"></div>
<div class="hl" style="left:43px;top:537px;width:14px;background:#d9d9d9"></div>
<div class="hl" style="left:43px;top:562px;width:14px;background:#d9d9d9"></div>
<div class="hl" style="left:43px;top:587px;width:14px;background:#d9d9d9"></div>
<div class="hl" style="left:43px;top:612px;width:14px;background:#d9d9d9"></div>
<div class="hl" style="left:43px;top:637px;width:14px;background:#d9d9d9"></div>
<div class="hl" style="left:43px;top:662px;width:14px;background:#d9d9d9"></div>
<div class="hl" style="left:43px;top:687px;width:14px;background:#d9d9d9"></div>
<div class="hl" style="left:43px;top:712px;width:14px;background:#d9d9d9"></div>
<div class="hl" style="left:43px;top:737px;width:14px;background:#d9d9d9"></div>
<div class="hl" style="left:43px;top:762px;width:14px;background:#d9d9d9"></div>
<div class="hl" style="left:43px;top:787px;width:14px;background:#d9d9d9"></div>
<div class="hl" style="left:43px;top:812px;width:14px;background:#d9d9d9"></div>
<div class="hl" style="left:43px;top:837px;width:14px;background:#d9d9d9"></div>
<div class="hl" style="left:43px;top:862px;width:14px;background:#d9d9d9"></div>
<span class="t" style="left:41.90px;top:322.05px;font-size:12.2px;transform:scaleX(0.8143);color:#444">1</span>
<span class="t" style="left:41.30px;top:373.05px;font-size:12.2px;transform:scaleX(0.9286);color:#444">2</span>
<span class="t" style="left:41.30px;top:398.05px;font-size:12.2px;transform:scaleX(0.9286);color:#1d6f42">3</span>
<span class="t" style="left:41.30px;top:423.05px;font-size:12.2px;transform:scaleX(0.9286);color:#444">4</span>
<span class="t" style="left:41.30px;top:448.05px;font-size:12.2px;transform:scaleX(0.9286);color:#444">5</span>
<span class="t" style="left:41.30px;top:473.05px;font-size:12.2px;transform:scaleX(0.9286);color:#444">6</span>
<span class="t" style="left:41.30px;top:498.05px;font-size:12.2px;transform:scaleX(0.9286);color:#444">7</span>
<span class="t" style="left:41.30px;top:523.05px;font-size:12.2px;transform:scaleX(0.9286);color:#444">8</span>
<span class="t" style="left:41.30px;top:548.05px;font-size:12.2px;transform:scaleX(0.9286);color:#444">9</span>
<span class="t" style="left:38.30px;top:573.05px;font-size:12.2px;transform:scaleX(1.0234);color:#444">10</span>
<span class="t" style="left:39.10px;top:598.05px;font-size:12.2px;transform:scaleX(0.9866);color:#444">11</span>
<span class="t" style="left:38.30px;top:623.05px;font-size:12.2px;transform:scaleX(1.0234);color:#444">12</span>
<span class="t" style="left:38.30px;top:648.05px;font-size:12.2px;transform:scaleX(1.0234);color:#444">13</span>
<span class="t" style="left:38.30px;top:673.05px;font-size:12.2px;transform:scaleX(1.0234);color:#444">14</span>
<span class="t" style="left:38.30px;top:698.05px;font-size:12.2px;transform:scaleX(1.0234);color:#444">15</span>
<span class="t" style="left:38.30px;top:723.05px;font-size:12.2px;transform:scaleX(1.0234);color:#444">16</span>
<span class="t" style="left:38.30px;top:748.05px;font-size:12.2px;transform:scaleX(1.0234);color:#444">17</span>
<span class="t" style="left:38.30px;top:773.05px;font-size:12.2px;transform:scaleX(1.0234);color:#444">18</span>
<span class="t" style="left:38.30px;top:798.05px;font-size:12.2px;transform:scaleX(1.0234);color:#444">19</span>
<span class="t" style="left:38.30px;top:823.05px;font-size:12.2px;transform:scaleX(1.0234);color:#444">20</span>
<span class="t" style="left:38.30px;top:848.05px;font-size:12.2px;transform:scaleX(1.0234);color:#444">21</span>
<span class="t" style="left:38.30px;top:873.05px;font-size:12.2px;transform:scaleX(1.0234);color:#444">22</span>
<!-- ===== table content ===== -->
<div class="a" style="left:58px;top:337px;width:895px;height:50px;background:#c4d79b"></div>
<div class="hl" style="left:58px;top:412px;width:895px;background:repeating-linear-gradient(90deg,#000 0 1px,transparent 1px 2px)"></div>
<div class="hl" style="left:59px;top:437px;width:894px;background:repeating-linear-gradient(90deg,#000 0 1px,transparent 1px 2px)"></div>
<div class="hl" style="left:58px;top:462px;width:895px;background:repeating-linear-gradient(90deg,#000 0 1px,transparent 1px 2px)"></div>
<div class="hl" style="left:59px;top:487px;width:894px;background:repeating-linear-gradient(90deg,#000 0 1px,transparent 1px 2px)"></div>
<div class="hl" style="left:58px;top:512px;width:895px;background:repeating-linear-gradient(90deg,#000 0 1px,transparent 1px 2px)"></div>
<div class="hl" style="left:59px;top:537px;width:894px;background:repeating-linear-gradient(90deg,#000 0 1px,transparent 1px 2px)"></div>
<div class="hl" style="left:58px;top:562px;width:895px;background:repeating-linear-gradient(90deg,#000 0 1px,transparent 1px 2px)"></div>
<div class="hl" style="left:59px;top:587px;width:894px;background:repeating-linear-gradient(90deg,#000 0 1px,transparent 1px 2px)"></div>
<div class="hl" style="left:58px;top:612px;width:895px;background:repeating-linear-gradient(90deg,#000 0 1px,transparent 1px 2px)"></div>
<div class="hl" style="left:59px;top:637px;width:894px;background:repeating-linear-gradient(90deg,#000 0 1px,transparent 1px 2px)"></div>
<div class="hl" style="left:58px;top:662px;width:895px;background:repeating-linear-gradient(90deg,#000 0 1px,transparent 1px 2px)"></div>
<div class="hl" style="left:59px;top:687px;width:894px;background:repeating-linear-gradient(90deg,#000 0 1px,transparent 1px 2px)"></div>
<div class="hl" style="left:58px;top:712px;width:895px;background:repeating-linear-gradient(90deg,#000 0 1px,transparent 1px 2px)"></div>
<div class="hl" style="left:59px;top:737px;width:894px;background:repeating-linear-gradient(90deg,#000 0 1px,transparent 1px 2px)"></div>
<div class="hl" style="left:58px;top:762px;width:895px;background:repeating-linear-gradient(90deg,#000 0 1px,transparent 1px 2px)"></div>
<div class="hl" style="left:59px;top:787px;width:894px;background:repeating-linear-gradient(90deg,#000 0 1px,transparent 1px 2px)"></div>
<div class="hl" style="left:58px;top:812px;width:895px;background:repeating-linear-gradient(90deg,#000 0 1px,transparent 1px 2px)"></div>
<div class="hl" style="left:59px;top:837px;width:894px;background:repeating-linear-gradient(90deg,#000 0 1px,transparent 1px 2px)"></div>
<div class="hl" style="left:58px;top:862px;width:895px;background:repeating-linear-gradient(90deg,#000 0 1px,transparent 1px 2px)"></div>
<div class="vl" style="left:169px;top:389px;height:497px;background:repeating-linear-gradient(180deg,#000 0 1px,transparent 1px 2px)"></div>
<div class="vl" style="left:281px;top:389px;height:497px;background:repeating-linear-gradient(180deg,#000 0 1px,transparent 1px 2px)"></div>
<div class="vl" style="left:393px;top:389px;height:497px;background:repeating-linear-gradient(180deg,#000 0 1px,transparent 1px 2px)"></div>
<div class="vl" style="left:505px;top:389px;height:497px;background:repeating-linear-gradient(180deg,#000 0 1px,transparent 1px 2px)"></div>
<div class="vl" style="left:617px;top:389px;height:497px;background:repeating-linear-gradient(180deg,#000 0 1px,transparent 1px 2px)"></div>
<div class="vl" style="left:729px;top:389px;height:497px;background:repeating-linear-gradient(180deg,#000 0 1px,transparent 1px 2px)"></div>
<div class="vl" style="left:841px;top:389px;height:497px;background:repeating-linear-gradient(180deg,#000 0 1px,transparent 1px 2px)"></div>
<div class="hl" style="left:58px;top:336px;width:896px;background:#000"></div>
<div class="hl" style="left:58px;top:387px;width:896px;background:#000"></div>
<div class="vl" style="left:169px;top:336px;height:52px;background:#000"></div>
<div class="vl" style="left:281px;top:336px;height:52px;background:#000"></div>
<div class="vl" style="left:393px;top:336px;height:52px;background:#000"></div>
<div class="vl" style="left:505px;top:336px;height:52px;background:#000"></div>
<div class="vl" style="left:617px;top:336px;height:52px;background:#000"></div>
<div class="vl" style="left:729px;top:336px;height:52px;background:#000"></div>
<div class="vl" style="left:841px;top:336px;height:52px;background:#000"></div>
<div class="vl" style="left:953px;top:298px;height:588px;background:#000"></div>
<div class="a" style="left:56px;top:386px;width:115px;height:28px;box-sizing:border-box;border:2px solid #1d6f42"></div>
<div class="a" style="left:166px;top:409px;width:7px;height:7px;background:#fff"></div>
<div class="a" style="left:167px;top:410px;width:5px;height:5px;background:#1d6f42"></div>
<span class="t" style="left:61.23px;top:316.05px;font-size:17.8px;transform:scaleX(0.9748);color:#000;font-weight:bold">Records Disposition Log</span>
<span class="t" style="left:75.00px;top:349.05px;font-size:11.5px;transform:scaleX(1.0788);color:#000;font-weight:bold">Department /</span>
<span class="t" style="left:71.10px;top:366.05px;font-size:11.5px;transform:scaleX(0.9822);color:#000;font-weight:bold">Records Owner</span>
<span class="t" style="left:185.20px;top:358.05px;font-size:11.5px;transform:scaleX(1.0203);color:#000;font-weight:bold">Witness Name</span>
<span class="t" style="left:290.20px;top:349.05px;font-size:11.5px;transform:scaleX(0.9458);color:#000;font-weight:bold">Records Series or</span>
<span class="t" style="left:312.90px;top:366.05px;font-size:11.5px;transform:scaleX(0.9693);color:#000;font-weight:bold">Category</span>
<span class="t" style="left:428.10px;top:349.05px;font-size:11.5px;transform:scaleX(0.9425);color:#000;font-weight:bold">Records</span>
<span class="t" style="left:418.10px;top:366.05px;font-size:11.5px;transform:scaleX(0.9773);color:#000;font-weight:bold">Description</span>
<span class="t" style="left:531.30px;top:349.05px;font-size:11.5px;transform:scaleX(0.9523);color:#000;font-weight:bold">Disposition</span>
<span class="t" style="left:537.30px;top:366.05px;font-size:11.5px;transform:scaleX(1.0431);color:#000;font-weight:bold">Methods</span>
<span class="t" style="left:629.30px;top:349.05px;font-size:11.5px;transform:scaleX(0.9808);color:#000;font-weight:bold">Disposition Date</span>
<span class="t" style="left:754.00px;top:349.05px;font-size:11.5px;transform:scaleX(0.9973);color:#000;font-weight:bold">Destruction</span>
<span class="t" style="left:747.00px;top:366.05px;font-size:11.5px;transform:scaleX(0.9866);color:#000;font-weight:bold">Authorized By</span>
<span class="t" style="left:862.00px;top:341.05px;font-size:11.5px;transform:scaleX(1.0133);color:#000;font-weight:bold">Certificate of</span>
<span class="t" style="left:866.30px;top:358.05px;font-size:11.5px;transform:scaleX(0.9958);color:#000;font-weight:bold">Destruction</span>
<span class="t" style="left:876.80px;top:375.05px;font-size:11.5px;transform:scaleX(1.0723);color:#000;font-weight:bold">Yes/No</span>
<!-- ===== vertical scrollbar ===== -->
<div class="a" style="left:1248.5px;top:279px;width:17.5px;height:610px;border-radius:9px;background:#f5f3f4"></div>
<svg style="left:1252.6px;top:282.4px" width="10" height="8" viewBox="0 0 10 8"><path d="M5 0.8 L9.3 7 H0.7 Z" fill="#6e6e6e" stroke="#6e6e6e" stroke-width=".8" stroke-linejoin="round"/></svg>
<div class="a" style="left:1253px;top:295px;width:9px;height:91.5px;border-radius:4.5px;background:#6e6e6e"></div>
<svg style="left:1252.6px;top:876.8px" width="10" height="8" viewBox="0 0 10 8"><path d="M0.7 1 H9.3 L5 7.2 Z" fill="#6e6e6e" stroke="#6e6e6e" stroke-width=".8" stroke-linejoin="round"/></svg>
<!-- ===== sheet tab bar ===== -->
<div class="a" style="left:32px;top:886px;width:1214px;height:1px;background:#dcd9da"></div>
<div class="a" style="left:147.5px;top:886px;width:115.5px;height:27.4px;border-radius:0 0 5px 5px;background:#fdfcfc"></div>
<svg style="left:60px;top:896px" width="8" height="11" viewBox="0 0 8 11" fill="none" stroke="#a8a8a8" stroke-width="1.1"><path d="M6.6 0.8 L1.4 5.5 L6.6 10.2"/></svg>
<svg style="left:92px;top:896px" width="8" height="11" viewBox="0 0 8 11" fill="none" stroke="#a8a8a8" stroke-width="1.1"><path d="M1.4 0.8 L6.6 5.5 L1.4 10.2"/></svg>
<span class="t" style="left:154.99px;top:893.05px;font-size:13.2px;transform:scaleX(1.1133);color:#1f1f1f;-webkit-text-stroke:.4px #1f1f1f">Disposition Log</span>
<div class="a" style="left:156px;top:908.7px;width:99px;height:2.3px;border-radius:1px;background:#1a7446"></div>
<span class="t" style="left:280.30px;top:896.05px;font-size:13.2px;transform:scaleX(1.0033);color:#333">Sheet3</span>
<div class="vl" style="left:335px;top:892px;height:19px;background:#d8d2d5"></div>
<svg style="left:378px;top:896.5px" width="11" height="11" viewBox="0 0 11 11" fill="none" stroke="#333" stroke-width="1.1"><path d="M5.5 0.4 V10.6 M0.4 5.5 H10.6"/></svg>
<div class="a" style="left:775px;top:898px;width:2px;height:2px;background:#333"></div><div class="a" style="left:775px;top:902px;width:2px;height:2px;background:#333"></div><div class="a" style="left:775px;top:906px;width:2px;height:2px;background:#333"></div>
<!-- horizontal scrollbar -->
<div class="a" style="left:792.5px;top:893.8px;width:456px;height:16px;border-radius:8px;background:#f6f4f5"></div>
<svg style="left:795.8px;top:897px" width="8" height="9" viewBox="0 0 8 9"><path d="M0.6 4.5 L7.4 0.4 V8.6 Z" fill="#6e6e6e"/></svg>
<div class="a" style="left:809px;top:897px;width:412px;height:9px;border-radius:4.5px;background:#737373"></div>
<svg style="left:1236.5px;top:897px" width="8" height="9" viewBox="0 0 8 9"><path d="M7.4 4.5 L0.6 0.4 V8.6 Z" fill="#6e6e6e"/></svg>
<!-- ===== status bar ===== -->
<div class="a" style="left:32px;top:918px;width:1236px;height:22px;border-radius:0 0 7px 7px;background:linear-gradient(180deg,#fbfafa 0,#f5f4f4 1.5px,#f5f4f4 100%)"></div>
<span class="t" style="left:43.30px;top:925.05px;font-size:11.2px;transform:scaleX(0.9467);color:#333">Ready</span>
<svg style="left:94px;top:923.5px" width="15" height="13" viewBox="0 0 15 13" fill="none" stroke="#333" stroke-width="1"><path d="M0.5 12.4 V0.5 H14.2 V5"/><path d="M0.5 3.2 H14.2"/><path d="M2.6 6 H6 M2.6 8.4 H5 M2.6 10.6 H5"/><circle cx="10.4" cy="8.8" r="3.6"/><circle cx="10.4" cy="8.8" r="1.5" fill="#333"/></svg>
<svg style="left:0;top:0" width="1300" height="1000" viewBox="0 0 1300 1000" fill="none" stroke="#333" stroke-width="1"><circle cx="132.3" cy="923.9" r="1.5"/><path d="M126.7 925 C127.6 927.2 129.6 927.6 132.3 927.6 C135 927.6 137 927.2 137.9 925"/><path d="M130 927.6 V931.4 C130 933 128.6 933.6 128.4 935.6 M134.4 927.6 V930.4"/><path d="M133.2 932.6 L135.6 935.2 L140.6 930.2"/></svg>
<span class="t" style="left:142.80px;top:925.05px;font-size:11.2px;transform:scaleX(1.0378);color:#333">Accessibility: Good to go</span>
<div class="a" style="left:957px;top:918.4px;width:40px;height:21.6px;background:#dfdfdf"></div>
<svg style="left:969.6px;top:922px" width="14" height="13" viewBox="0 0 14 13" fill="none" stroke="#333" stroke-width="1.2"><rect x="0.5" y="0.5" width="13" height="12"/><path d="M0.5 4.5 H13.5 M0.5 8.5 H13.5 M4.8 0.5 V12.5 M9.2 0.5 V12.5"/></svg>
<svg style="left:1010px;top:922px" width="14" height="13" viewBox="0 0 14 13" fill="none" stroke="#333" stroke-width="1.1"><rect x="0.5" y="0.5" width="13" height="12"/><rect x="3.5" y="3" width="7" height="7"/><path d="M5 5.2 H9 M5 7.6 H9" stroke-width=".8"/></svg>
<svg style="left:1050px;top:922px" width="14" height="13" viewBox="0 0 14 13" fill="none" stroke="#333" stroke-width="1.1"><rect x="0.6" y="0.6" width="12.8" height="11.8"/><path d="M5.2 0.6 V7.6 M8.7 0.6 V7.6 M0.6 7.6 H8.7"/></svg>
<div class="a" style="left:1083px;top:929px;width:8px;height:1px;background:#333"></div>
<div class="a" style="left:1096.5px;top:929px;width:98.5px;height:1px;background:#7a7a7a"></div>
<div class="a" style="left:1144px;top:924px;width:5px;height:11px;background:#5e5e5e"></div>
<svg style="left:1200.5px;top:925px" width="9" height="9" viewBox="0 0 9 9" fill="none" stroke="#333" stroke-width="1"><path d="M4.5 0.2 V8.8 M0.2 4.5 H8.8"/></svg>
<span class="t" style="left:1222.20px;top:924.05px;font-size:11.2px;transform:scaleX(0.9419);color:#333">100%</span>
</div>
</body>
</html>
